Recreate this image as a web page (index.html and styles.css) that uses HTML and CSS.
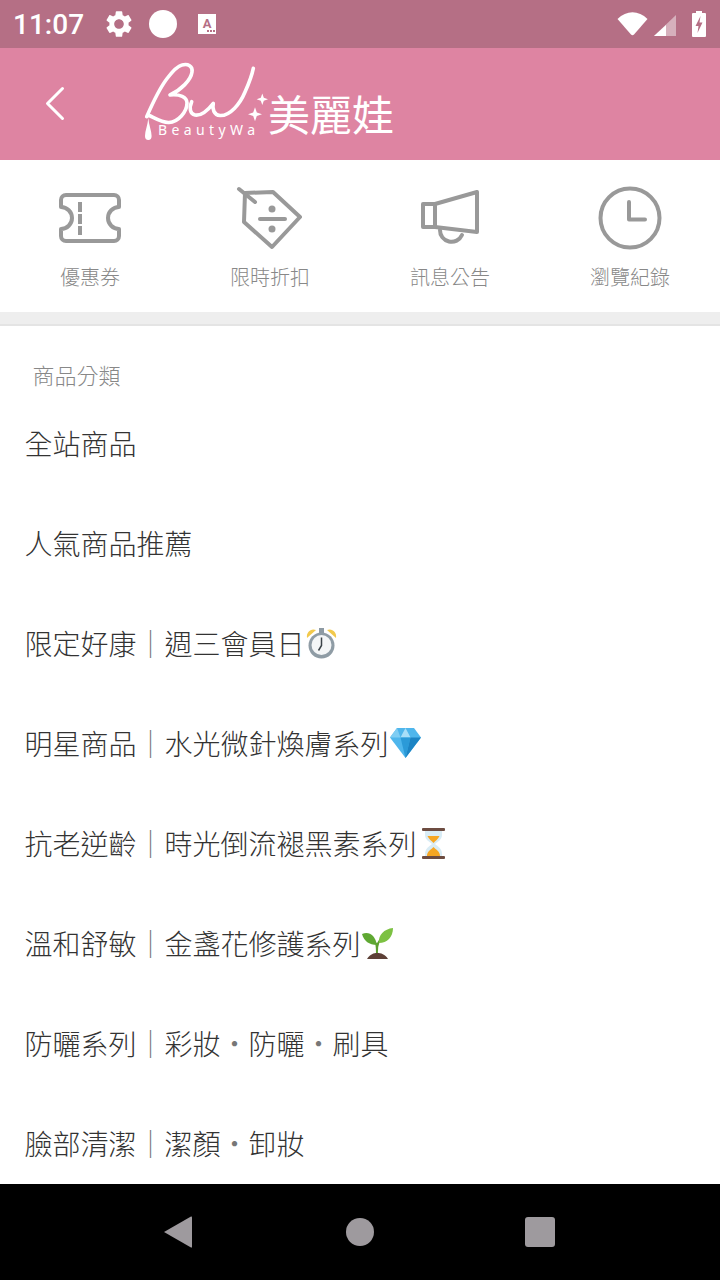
FILE: index.html
```html
<!DOCTYPE html>
<html lang="zh-Hant">
<head>
    <meta charset="UTF-8">
    <meta name="viewport" content="width=device-width, initial-scale=1.0">
    <title>美麗娃 商品分類</title>
    <link rel="stylesheet" href="styles.css">
</head>
<body>
<div class="page">

    <div class="status-bar">
        <span class="time">11:07</span>
        <svg class="ic-gear" viewBox="0 0 24 24"><path fill="#fff" fill-rule="evenodd" d="M19.14,12.94c0.04-0.3,0.06-0.61,0.06-0.94c0-0.32-0.02-0.64-0.07-0.94l2.03-1.58c0.18-0.14,0.23-0.41,0.12-0.61 l-1.92-3.32c-0.12-0.22-0.37-0.29-0.59-0.22l-2.39,0.96c-0.5-0.38-1.03-0.7-1.62-0.94L14.4,2.81c-0.04-0.24-0.24-0.41-0.48-0.41 h-3.84c-0.24,0-0.43,0.17-0.47,0.41L9.25,5.35C8.66,5.59,8.12,5.92,7.63,6.29L5.24,5.33c-0.22-0.08-0.47,0-0.59,0.22L2.74,8.87 C2.62,9.08,2.66,9.34,2.86,9.48l2.03,1.58C4.84,11.36,4.8,11.69,4.8,12s0.02,0.64,0.07,0.94l-2.03,1.58 c-0.18,0.14-0.23,0.41-0.12,0.61l1.92,3.32c0.12,0.22,0.37,0.29,0.59,0.22l2.39-0.96c0.5,0.38,1.03,0.7,1.62,0.94l0.36,2.54 c0.05,0.24,0.24,0.41,0.48,0.41h3.84c0.24,0,0.44-0.17,0.47-0.41l0.36-2.54c0.59-0.24,1.13-0.56,1.62-0.94l2.39,0.96 c0.22,0.08,0.47,0,0.59-0.22l1.92-3.32c0.12-0.22,0.07-0.47-0.12-0.61L19.14,12.94z M12,15.6c-1.98,0-3.6-1.62-3.6-3.6 s1.62-3.6,3.6-3.6s3.6,1.62,3.6,3.6S13.98,15.6,12,15.6z"/></svg>
        <span class="ic-dot"></span>
        <svg class="ic-font" viewBox="0 0 18 20">
            <rect width="18" height="20" fill="#fff"/>
            <text class="ic-font-letter" x="9" y="13.5" text-anchor="middle">A</text>
            <rect x="9" y="16" width="2" height="2" fill="#b56f85"/>
            <rect x="12" y="16" width="2" height="2" fill="#b56f85"/>
            <rect x="15" y="16" width="2" height="2" fill="#b56f85"/>
        </svg>
        <svg class="ic-wifi" viewBox="0 0 31 24"><path fill="#fff" d="M0.5 7 C9.5 -2 21.5 -2 30.5 7 L17 22.5 Q15.5 24 14 22.5 Z"/></svg>
        <svg class="ic-signal" viewBox="0 0 22 21">
            <path fill="#fff" fill-opacity="0.45" d="M22 0 V21 H0 Z"/>
            <path fill="#fff" d="M12 10 V21 H0 Z"/>
        </svg>
        <svg class="ic-battery" viewBox="0 0 14 26">
            <path fill="#fff" d="M4 0 H10 V2 H13 Q14 2 14 3 V25 Q14 26 13 26 H1 Q0 26 0 25 V3 Q0 2 1 2 H4 Z"/>
            <path fill="#b56f85" d="M8.5 5 L3.5 15 H6.5 L5.5 22 L10.5 11.5 H7.5 Z"/>
        </svg>
    </div>

    <div class="header">
        <svg class="back" viewBox="0 0 24 40"><path d="M18.5 4.5 L3.5 19.5 L18.5 34.5" fill="none" stroke="#fff" stroke-width="3" stroke-linecap="round" stroke-linejoin="round"/></svg>
        <!-- logo -->
        <svg class="logo" viewBox="0 0 260 112">
            <g fill="none" stroke="#fff" stroke-width="3.6" stroke-linecap="round" stroke-linejoin="round">
                <path d="M6.7 68.7 C14 52 20 40 26.7 31 C32 24 37 18 42 17 C48 15.5 53 18 52 24 C51 32 41 42 30 47 C40 46 47 49 47 55 C47 64 38 74 29 74.5 C22 75 15 70 8 67"/>
                <path d="M51.7 53.7 C49 60 50 66 55 67 C61 68 68 62 73.3 55.3 C72 61 74 67 80 67.5 C90 68 100 56 105 44 C109 35 112 27 113.3 20.3"/>
            </g>
            <path fill="#fff" d="M8.3 70 C8.8 77 11.6 83 11.6 88 A3.3 4 0 0 1 5 88 C5 83 7.8 77 8.3 70 Z"/>
            <path fill="#fff" d="M122.3 45.5 L123.8 49.8 L128 51.3 L123.8 52.8 L122.3 57 L120.8 52.8 L116.6 51.3 L120.8 49.8 Z"/>
            <path fill="#fff" d="M115 59.3 L116.8 64.5 L122 66.3 L116.8 68.1 L115 73.3 L113.2 68.1 L108 66.3 L113.2 64.5 Z"/>
            <text class="logo-latin" x="18" y="87" textLength="97">BeautyWa</text>
            <text class="logo-cjk" x="128" y="83">美麗娃</text>
        </svg>
    </div>

    <div class="shortcuts">
        <div class="shortcut">
            <svg class="shortcut-icon" viewBox="0 0 72 72">
                <path d="M12 13 H60 A5 5 0 0 1 65 18 V25 A11 11 0 0 0 65 47 V54 A5 5 0 0 1 60 59 H12 A5 5 0 0 1 7 54 V47 A11 11 0 0 0 7 25 V18 A5 5 0 0 1 12 13 Z"/>
                <path d="M26 20 V30 M26 32 V42 M26 44 V53" stroke-linecap="butt"/>
            </svg>
            <span>優惠券</span>
        </div>
        <div class="shortcut">
            <svg class="shortcut-icon" viewBox="0 0 72 72">
                <path d="M11 11 L39 10 L66 35 L38 65 L10 40 Z"/>
                <path d="M5 7 L21 20"/>
                <path d="M26 37 H51"/>
                <circle class="solid" cx="38" cy="27" r="3.5"/>
                <circle class="solid" cx="38" cy="47" r="3.5"/>
            </svg>
            <span>限時折扣</span>
        </div>
        <div class="shortcut">
            <svg class="shortcut-icon" viewBox="0 0 72 72">
                <path d="M21 22 L63 10 V50 L21 45 Z"/>
                <path d="M21 22 H9 V45 H21"/>
                <path d="M26 48 A11.5 11.5 0 0 0 48 53"/>
            </svg>
            <span>訊息公告</span>
        </div>
        <div class="shortcut">
            <svg class="shortcut-icon" viewBox="0 0 72 72">
                <circle cx="36" cy="36" r="29.5"/>
                <path d="M35 20 V37.5 H51"/>
            </svg>
            <span>瀏覽紀錄</span>
        </div>
    </div>

    <div class="divider"></div>

    <div class="content">
        <div class="section-title">商品分類</div>
        <div class="row">全站商品</div>
        <div class="row">人氣商品推薦</div>
        <div class="row">限定好康<span class="sep">｜</span>週三會員日
            <svg class="emoji" viewBox="0 0 34 34">
                <path fill="#f2c94c" d="M2 12 C1 6 6 2 11 4 Z"/>
                <path fill="#f2c94c" d="M31 12 C32 6 27 2 22 4 Z"/>
                <rect x="14" y="2" width="5" height="5" fill="#8d9aa3"/>
                <circle cx="16.5" cy="19.5" r="13" fill="#8f9ca5"/>
                <circle cx="16.5" cy="19" r="10" fill="#f4f6f7"/>
                <path d="M16.5 11.5 V19.5 L13.5 24.5" fill="none" stroke="#3c4449" stroke-width="1.5"/>
            </svg>
        </div>
        <div class="row">明星商品<span class="sep">｜</span>水光微針煥膚系列
            <svg class="emoji" viewBox="0 0 34 34">
                <path fill="#4fb6ec" d="M8 2 H25 L32 11.5 L16.5 32 L1 11.5 Z"/>
                <path fill="#a8def8" d="M11.5 11.5 L16.5 2 L21.5 11.5 Z"/>
                <path fill="#2b9ad8" d="M11.5 11.5 H21.5 L16.5 32 Z"/>
                <path fill="#1c84c4" d="M21.5 11.5 H32 L16.5 32 Z"/>
                <path fill="#7fcdf3" d="M1 11.5 L8 2 L11.5 11.5 Z"/>
            </svg>
        </div>
        <div class="row">抗老逆齡<span class="sep">｜</span>時光倒流褪黑素系列
            <svg class="emoji" viewBox="0 0 34 34">
                <path fill="#d9ecf5" d="M8 4 H25 V9 C25 14 20 16 18 18 C20 20 25 22 25 28 V31 H8 V28 C8 22 13 20 15 18 C13 16 8 14 8 9 Z"/>
                <path fill="#f6a623" d="M10.5 10 H22.5 C21.5 13 18 15 16.5 17 C15 15 11.5 13 10.5 10 Z"/>
                <path fill="#f6a623" d="M16.5 21 C19 24 23 25 23 30 H10 C10 25 14 24 16.5 21 Z"/>
                <rect x="5" y="2" width="23" height="3" rx="1" fill="#6d4c41"/>
                <rect x="5" y="30" width="23" height="3" rx="1" fill="#6d4c41"/>
            </svg>
        </div>
        <div class="row">溫和舒敏<span class="sep">｜</span>金盞花修護系列
            <svg class="emoji" viewBox="0 0 34 34">
                <path fill="none" stroke="#5d9e2f" stroke-width="2" d="M16 29 C16 24 16 20 15 17 M16 25 C16 18 18 14 21 12"/>
                <path fill="#5fa832" d="M1 8 C8 5 14 9 16 19 C8 19 3 15 1 8 Z"/>
                <path fill="#7cc142" d="M32 2 C32 11 26 17 18 17 C17 9 23 3 32 2 Z"/>
                <path fill="#5d4037" d="M6 33 C9 28 13 27 16 27 C20 27 24 28 27 33 Z"/>
            </svg>
        </div>
        <div class="row">防曬系列<span class="sep">｜</span>彩妝<span class="sep">・</span>防曬<span class="sep">・</span>刷具</div>
        <div class="row">臉部清潔<span class="sep">｜</span>潔顏<span class="sep">・</span>卸妝</div>
    </div>

    <div class="nav-bar">
        <svg class="nav-back" viewBox="0 0 28 32"><path fill="#9e9a9e" d="M27 0.5 Q28 0 28 1.5 V30.5 Q28 32 27 31.5 L0 16 Z"/></svg>
        <span class="nav-home"></span>
        <span class="nav-recent"></span>
    </div>

</div>
</body>
</html>
```
FILE: styles.css
```css
html, body {
    margin: 0;
    padding: 0;
    background-color: #fff;
}
.page {
    width: 720px;
    height: 1280px;
    display: flex;
    flex-direction: column;
    overflow: hidden;
    font-family: "Noto Sans CJK TC", "Noto Sans", sans-serif;
}

/* status bar */
.status-bar {
    height: 48px;
    flex: none;
    display: flex;
    align-items: center;
    padding: 0 14px 0 13px;
    background-color: #b56f85;
}
.time {
    width: 69px;
    font-family: Roboto, sans-serif;
    font-size: 28px;
    font-weight: 500;
    color: #fff;
    white-space: nowrap;
}
.ic-gear {
    width: 32px;
    height: 32px;
    margin-left: 21px;
}
.ic-dot {
    width: 28px;
    height: 28px;
    margin-left: 14px;
    border-radius: 50%;
    background-color: #fff;
}
.ic-font {
    width: 18px;
    height: 20px;
    margin-left: 21px;
}
.ic-font-letter {
    font-family: Roboto, sans-serif;
    font-size: 13px;
    font-weight: 700;
    fill: #b56f85;
}
.ic-wifi {
    width: 31px;
    height: 24px;
    margin-left: auto;
    margin-top: -1px;
}
.ic-signal {
    width: 22px;
    height: 21px;
    margin-left: 6px;
    margin-top: 2px;
}
.ic-battery {
    width: 14px;
    height: 26px;
    margin-left: 16px;
}

/* pink header */
.header {
    height: 112px;
    flex: none;
    display: flex;
    align-items: center;
    background-color: #de84a2;
}
.back {
    width: 24px;
    height: 40px;
    margin-left: 44px;
}
.logo {
    width: 260px;
    height: 112px;
    margin-left: 72px;
}
.logo-latin {
    font-family: "Noto Sans", sans-serif;
    font-size: 14px;
    fill: #fff;
}
.logo-cjk {
    font-family: "Noto Sans CJK TC", sans-serif;
    font-size: 42px;
    font-weight: 400;
    fill: #fff;
}

/* shortcuts */
.shortcuts {
    height: 152px;
    flex: none;
    display: grid;
    grid-template-columns: repeat(4, 180px);
}
.shortcut {
    display: flex;
    flex-direction: column;
    align-items: center;
    padding-top: 22px;
    font-size: 20px;
    font-weight: 300;
    line-height: 30px;
    color: #888;
}
.shortcut-icon {
    width: 72px;
    height: 72px;
    margin-bottom: 8px;
    fill: none;
    stroke: #999;
    stroke-width: 4;
    stroke-linecap: round;
    stroke-linejoin: round;
}
.shortcut-icon .solid {
    fill: #999;
    stroke: none;
}
.divider {
    height: 12px;
    flex: none;
    background-color: #eee;
    border-bottom: 2px solid #e4e4e4;
}

/* list */
.content {
    flex: 1;
    min-height: 0;
    overflow: hidden;
    padding-left: 24.5px;
    background-color: #fff;
}
.section-title {
    height: 67px;
    padding: 32px 0 0 8px;
    box-sizing: border-box;
    font-size: 22px;
    font-weight: 300;
    line-height: 32px;
    color: #888;
}
.row {
    height: 100px;
    display: flex;
    align-items: center;
    font-size: 28px;
    font-weight: 300;
    color: #333;
    white-space: nowrap;
}
.sep {
    color: #777;
}
.emoji {
    width: 34px;
    height: 34px;
    flex: none;
}

/* android nav */
.nav-bar {
    height: 96px;
    flex: none;
    position: relative;
    display: flex;
    align-items: center;
    background-color: #000;
}
.nav-back {
    width: 28px;
    height: 32px;
    margin-left: 164px;
}
.nav-home {
    width: 28px;
    height: 28px;
    margin-left: 154px;
    border-radius: 50%;
    background-color: #9e9a9e;
}
.nav-recent {
    width: 30px;
    height: 30px;
    margin-left: 151px;
    border-radius: 3px;
    background-color: #9e9a9e;
}
```
